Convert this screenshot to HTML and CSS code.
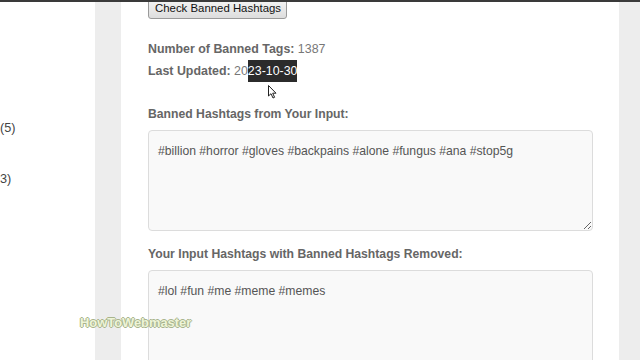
FILE: index.html
```html
<!DOCTYPE html>
<html lang="en">
<head>
  <meta charset="UTF-8" />
  <meta name="viewport" content="width=device-width, initial-scale=1.0"/>
  <title>Banned Hashtag Checker</title>
  <link rel="stylesheet" href="styles.css">
</head>
<body>
  <div class="page">
    <aside class="side">
      <div class="side-item">(5)</div>
      <div class="side-item">3)</div>
    </aside>

    <div class="wrap">
      <div class="panel">
        <div class="actions">
          <button class="check-btn">Check Banned Hashtags</button>
        </div>

        <div class="stats">
          <div><b>Number of Banned Tags:</b> 1387</div>
          <div><b>Last Updated:</b> 20<span class="sel">23-10-30</span></div>
        </div>

        <label class="field-label first">Banned Hashtags from Your Input:</label>
        <textarea class="result" readonly>#billion #horror #gloves #backpains #alone #fungus #ana #stop5g</textarea>

        <label class="field-label">Your Input Hashtags with Banned Hashtags Removed:</label>
        <textarea class="result" readonly>#lol #fun #me #meme #memes</textarea>
      </div>
    </div>
  </div>

  <svg class="cursor" width="10" height="14" viewBox="0 0 10 14">
    <path d="M0.5 0.5 L0.5 11 L3 8.7 L5 13 L6.6 12.3 L4.7 8.2 L8 8.2 Z" fill="#fff" stroke="#222" stroke-width="1"/>
  </svg>

  <div class="watermark">HowToWebmaster</div>
</body>
</html>
```

FILE: styles.css
```css
html, body {
  margin: 0;
  height: 360px;
  overflow: hidden;
}
body {
  font-family: "Liberation Sans", Arial, sans-serif;
  background: white;
  border-top: 2px solid #3a3a3a;
  box-sizing: border-box;
  color: #666;
}
.page {
  display: flex;
  height: 358px;
}
.side {
  width: 95px;
  padding-top: 116px;
  font-size: 12.7px;
  color: #444;
  overflow: hidden;
}
.side-item {
  line-height: 20px;
  margin-bottom: 31px;
}
.wrap {
  flex: 1;
  background: #ededed;
  padding: 0 21px 0 26px;
}
.panel {
  background: white;
  height: 100%;
  padding: 0 26px 0 27px;
  overflow: hidden;
}
.actions {
  margin-top: -5px;
}
.check-btn {
  font-family: "Liberation Sans", Arial, sans-serif;
  font-size: 11.4px;
  color: #111;
  height: 22px;
  padding: 0 5px 0 6px;
  border: 1px solid #9a9a9a;
  border-radius: 3px;
  background: linear-gradient(#f7f7f7, #dddddd);
}
.stats {
  margin-top: 20px;
  font-size: 12.4px;
  line-height: 21.5px;
  color: #777;
}
.stats b {
  color: #666;
}
.sel {
  background: #2b2b2b;
  color: white;
  padding: 4px 0;
}
.field-label {
  display: block;
  font-size: 12.2px;
  font-weight: bold;
  line-height: 21px;
  color: #666;
  margin-top: 13px;
  margin-bottom: 5px;
}
.field-label.first {
  margin-top: 22px;
}
.result {
  display: block;
  width: 100%;
  height: 101px;
  box-sizing: border-box;
  padding: 10px 9px 9px;
  font-family: "Liberation Sans", Arial, sans-serif;
  font-size: 12.2px;
  line-height: 20px;
  color: #555;
  background: #f9f9f9;
  border: 1px solid #dcdcdc;
  border-radius: 4px;
}
.cursor {
  position: absolute;
  left: 268px;
  top: 85px;
}
.watermark {
  position: absolute;
  left: 80px;
  top: 315px;
  font-size: 12.9px;
  font-weight: bold;
  color: #eef4d8;
  text-shadow: -1px 0 #a8b48c, 1px 0 #a8b48c, 0 -1px #a8b48c, 0 1px #a8b48c;
}
```
